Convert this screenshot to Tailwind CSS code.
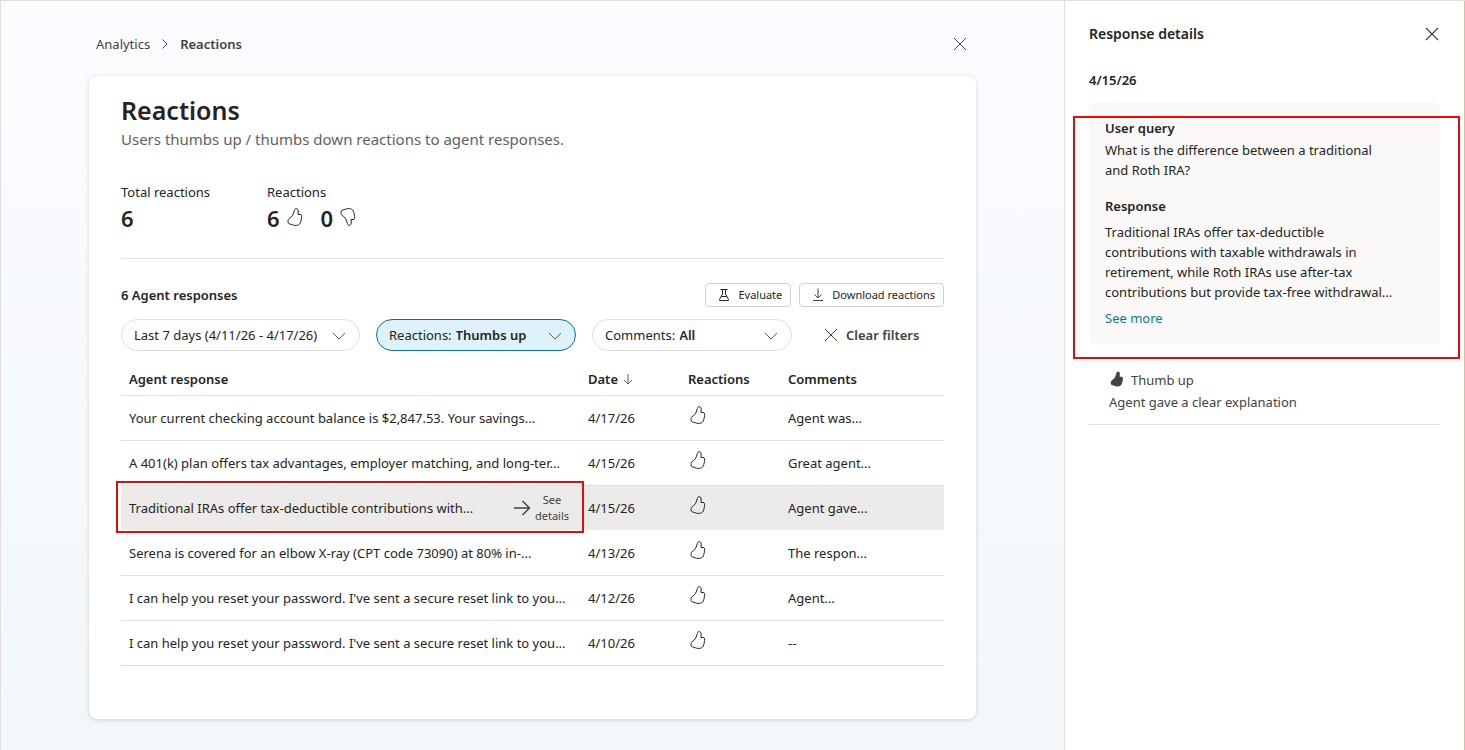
<!DOCTYPE html>
<html lang="en">
<head>
  <meta charset="UTF-8">
  <meta name="viewport" content="width=device-width, initial-scale=1.0">
  <title>Reactions | Analytics</title>
  <script src="https://cdn.jsdelivr.net/npm/@tailwindcss/browser@4"></script>
</head>
<body class="min-h-screen bg-white font-['Noto_Sans','Open_Sans',sans-serif] text-[13px] leading-5 text-[#242424]">
  <!-- Shared icons -->
  <svg class="hidden" aria-hidden="true">
    <symbol id="thumb" viewBox="0 0 16 18">
      <path d="M9 .600C8.200.500 7.700 1.300 7.400 2.500L6.200 6C5.800 7.200 4.800 8.600 3.800 9.400L2 10.700C1.400 11.200 1.200 11.800 1.100 12.600L1 14.200C1 15 1.400 15.500 2.200 15.800L4 16.300C5 16.600 5.600 17 6.600 17.200 8.200 17.600 10.400 17.500 11.800 16.700 13.100 16 13.700 14.200 14.100 12.200 14.500 10.200 14.900 8.700 14.600 7.500 14.400 6.800 13.900 6.500 13 6.500H11L11.200 3C11.200 1.600 10.400.700 9 .600Z" />
    </symbol>
    <symbol id="close" viewBox="0 0 14 14">
      <path d="M1 1l12 12M13 1L1 13" />
    </symbol>
    <symbol id="chevron" viewBox="0 0 14 8">
      <path d="M1 1l6 6 6-6" />
    </symbol>
  </svg>

  <div class="flex min-h-screen border-t border-l border-[#e0e0e0]">
    <!-- Main content -->
    <main class="min-w-0 flex-1 bg-linear-to-b from-[#fbfcff] to-[#f2f7fb] px-22 pb-[30px]">
      <div class="flex items-center justify-between pt-[33px] pr-[9px] pb-[22px] pl-[7px]">
        <nav class="flex items-center gap-3 text-[#424242]" aria-label="Breadcrumb">
          <a href="#">Analytics</a>
          <svg class="h-[10px] w-[6px] fill-none stroke-[#424242]" viewBox="0 0 6 10"><path d="M.5.5L5 5 .5 9.5" /></svg>
          <a href="#" class="font-semibold" aria-current="page">Reactions</a>
        </nav>
        <button type="button" aria-label="Close reactions">
          <svg class="size-[14px] fill-none stroke-[#424242]"><use href="#close" /></svg>
        </button>
      </div>

      <div class="rounded-lg bg-white px-8 pt-4 pb-[53px] shadow-[0_1px_4px_rgba(0,0,0,0.16)]">
        <h1 class="text-[25px] leading-9 font-semibold">Reactions</h1>
        <p class="mt-px text-[15px] text-[#616161]">Users thumbs up / thumbs down reactions to agent responses.</p>

        <!-- Totals -->
        <div class="mt-[33px] flex border-b border-[#e0e0e0] pb-6">
          <div class="w-[146px]">
            <div>Total reactions</div>
            <div class="text-[22px] leading-8 font-semibold">6</div>
          </div>
          <div>
            <div>Reactions</div>
            <div class="flex items-center gap-[18px] text-[22px] leading-8 font-semibold">
              <span class="flex items-center gap-[7px]">6
                <svg class="mb-[2px] h-[18px] w-4 fill-none stroke-[#242424]"><use href="#thumb" /></svg>
              </span>
              <span class="flex items-center gap-[7px]">0
                <svg class="mb-[2px] h-[18px] w-4 -scale-y-100 fill-none stroke-[#242424]"><use href="#thumb" /></svg>
              </span>
            </div>
          </div>
        </div>

        <div class="mt-6 flex items-center justify-between">
          <h2 class="font-semibold">6 Agent responses</h2>
          <div class="flex gap-2 text-[11px] leading-4">
            <button type="button" class="flex h-6 items-center gap-2 rounded border border-[#d1d1d1] pr-2 pl-3">
              <svg class="h-[14px] w-3 fill-none stroke-[#242424]" viewBox="0 0 12 14"><path d="M2.500 1.500h7M4.500 1.500v4.500L1.500 11.500q-.5 1 .5 1h8q1 0 .5-1L7.500 6V1.500M3.300 8.500h5.400" /></svg>
              Evaluate
            </button>
            <button type="button" class="flex h-6 items-center gap-2 rounded border border-[#d1d1d1] pr-2 pl-3">
              <svg class="h-[14px] w-3 fill-none stroke-[#424242]" viewBox="0 0 12 14"><path d="M6 .500v9.500M2.500 6.500L6 10l3.500-3.500M1 12.500h10" /></svg>
              Download reactions
            </button>
          </div>
        </div>

        <!-- Filters -->
        <div class="mt-3 flex gap-4">
          <div class="relative h-8 w-[239px] rounded-full border border-[#e0e0e0]">
            <select aria-label="Date range" class="size-full appearance-none rounded-full px-3">
              <option>Last 7 days (4/11/26 - 4/17/26)</option>
            </select>
            <svg class="pointer-events-none absolute top-3 right-[13px] h-2 w-[14px] fill-none stroke-[#616161]"><use href="#chevron" /></svg>
          </div>
          <div class="relative flex h-8 w-[200px] items-center gap-1 rounded-full border border-[#0f6f94] bg-[#def2fb] pl-3">
            <label for="reaction-filter">Reactions:</label>
            <select id="reaction-filter" class="h-full min-w-0 flex-1 appearance-none rounded-full font-semibold">
              <option>Thumbs up</option>
            </select>
            <svg class="pointer-events-none absolute top-3 right-[13px] h-2 w-[14px] fill-none stroke-[#616161]"><use href="#chevron" /></svg>
          </div>
          <div class="relative flex h-8 w-[200px] items-center gap-1 rounded-full border border-[#e0e0e0] pl-3">
            <label for="comment-filter">Comments:</label>
            <select id="comment-filter" class="h-full min-w-0 flex-1 appearance-none rounded-full font-semibold">
              <option>All</option>
            </select>
            <svg class="pointer-events-none absolute top-3 right-[13px] h-2 w-[14px] fill-none stroke-[#616161]"><use href="#chevron" /></svg>
          </div>
          <button type="button" class="ml-4 flex items-center gap-2 font-semibold text-[#424242]">
            <svg class="size-[14px] fill-none stroke-[#424242]"><use href="#close" /></svg>
            Clear filters
          </button>
        </div>

        <!-- Responses -->
        <table class="mt-3 w-full table-fixed text-left whitespace-nowrap">
          <colgroup>
            <col>
            <col class="w-[100px]">
            <col class="w-[100px]">
            <col class="w-[164px]">
          </colgroup>
          <thead>
            <tr class="h-8 border-b border-[#e0e0e0]">
              <th class="px-2 font-semibold">Agent response</th>
              <th class="px-2 font-semibold">
                <span class="flex items-center gap-[5px]">Date
                  <svg class="mt-[2px] h-[11px] w-[10px] fill-none stroke-[#616161]" viewBox="0 0 10 11"><path d="M5 0v10M1 6l4 4 4-4" /></svg>
                </span>
              </th>
              <th class="px-2 font-semibold">Reactions</th>
              <th class="px-2 font-semibold">Comments</th>
            </tr>
          </thead>
          <tbody>
            <tr class="h-[45px] border-b border-[#e0e0e0]">
              <td class="px-2">Your current checking account balance is $2,847.53. Your savings...</td>
              <td class="px-2">4/17/26</td>
              <td class="px-[10px]"><svg class="mb-[6px] h-[18px] w-4 fill-none stroke-[#242424]" role="img" aria-label="Thumb up"><use href="#thumb" /></svg></td>
              <td class="px-2">Agent was...</td>
            </tr>
            <tr class="h-[45px] border-b border-[#e0e0e0]">
              <td class="px-2">A 401(k) plan offers tax advantages, employer matching, and long-ter...</td>
              <td class="px-2">4/15/26</td>
              <td class="px-[10px]"><svg class="mb-[6px] h-[18px] w-4 fill-none stroke-[#242424]" role="img" aria-label="Thumb up"><use href="#thumb" /></svg></td>
              <td class="px-2">Great agent...</td>
            </tr>
            <tr class="h-[45px] border-b border-white bg-[#ecebe9]">
              <td class="relative px-2">
                <div class="flex items-center justify-between">
                  Traditional IRAs offer tax-deductible contributions with...
                  <button type="button" class="mr-[3px] flex items-center gap-1 text-[11px] leading-4 text-[#424242]">
                    <svg class="h-4 w-[18px] fill-none stroke-[#424242] stroke-[1.4]" viewBox="0 0 18 16"><path d="M1 8h15.500M9.500 1l7 7-7 7" /></svg>
                    <span>See<br>details</span>
                  </button>
                </div>
                <div class="pointer-events-none absolute -top-[5px] -right-1 -bottom-[3px] -left-[5px] border-2 border-[#e30b0b]"></div>
              </td>
              <td class="px-2">4/15/26</td>
              <td class="px-[10px]"><svg class="mb-[6px] h-[18px] w-4 fill-none stroke-[#242424]" role="img" aria-label="Thumb up"><use href="#thumb" /></svg></td>
              <td class="px-2">Agent gave...</td>
            </tr>
            <tr class="h-[45px] border-b border-[#e0e0e0]">
              <td class="px-2">Serena is covered for an elbow X-ray (CPT code 73090) at 80% in-...</td>
              <td class="px-2">4/13/26</td>
              <td class="px-[10px]"><svg class="mb-[6px] h-[18px] w-4 fill-none stroke-[#242424]" role="img" aria-label="Thumb up"><use href="#thumb" /></svg></td>
              <td class="px-2">The respon...</td>
            </tr>
            <tr class="h-[45px] border-b border-[#e0e0e0]">
              <td class="px-2">I can help you reset your password. I've sent a secure reset link to you...</td>
              <td class="px-2">4/12/26</td>
              <td class="px-[10px]"><svg class="mb-[6px] h-[18px] w-4 fill-none stroke-[#242424]" role="img" aria-label="Thumb up"><use href="#thumb" /></svg></td>
              <td class="px-2">Agent...</td>
            </tr>
            <tr class="h-[45px] border-b border-[#e0e0e0]">
              <td class="px-2">I can help you reset your password. I've sent a secure reset link to you...</td>
              <td class="px-2">4/10/26</td>
              <td class="px-[10px]"><svg class="mb-[6px] h-[18px] w-4 fill-none stroke-[#242424]" role="img" aria-label="Thumb up"><use href="#thumb" /></svg></td>
              <td class="px-2">--</td>
            </tr>
          </tbody>
        </table>
      </div>
    </main>

    <!-- Details panel -->
    <aside class="w-[401px] shrink-0 border-r border-l border-[#e0e0e0] border-r-[#d0c3a4] bg-white px-6 pt-[23px]">
      <div class="flex items-center justify-between">
        <h2 class="text-[14px] font-semibold">Response details</h2>
        <button type="button" class="mr-px" aria-label="Close details">
          <svg class="size-[14px] fill-none stroke-[#424242] stroke-[1.2]"><use href="#close" /></svg>
        </button>
      </div>
      <p class="mt-[26px] font-semibold">4/15/26</p>

      <div class="relative mt-3 rounded-lg bg-[#faf9f8] px-4 pt-4 pb-[17px]">
        <h3 class="font-semibold">User query</h3>
        <p class="mt-[2px]">What is the difference between a traditional<br>and Roth IRA?</p>
        <h3 class="mt-4 font-semibold">Response</h3>
        <p class="mt-[6px]">Traditional IRAs offer tax-deductible<br>contributions with taxable withdrawals in<br>retirement, while Roth IRAs use after-tax<br>contributions but provide tax-free withdrawal...</p>
        <button type="button" class="mt-[6px] text-[#0f7896]">See more</button>
        <div class="pointer-events-none absolute top-[14px] -right-5 -bottom-[14px] -left-4 border-2 border-[#e30b0b]"></div>
      </div>

      <div class="mt-[25px] border-b border-[#e0e0e0] px-5 pb-3 text-[#424242]">
        <div class="flex items-center gap-[6px]">
          <svg class="mb-[3px] h-4 w-4 fill-[#424242]"><use href="#thumb" /></svg>
          Thumb up
        </div>
        <p class="mt-[2px]">Agent gave a clear explanation</p>
      </div>
    </aside>
  </div>
</body>
</html>
